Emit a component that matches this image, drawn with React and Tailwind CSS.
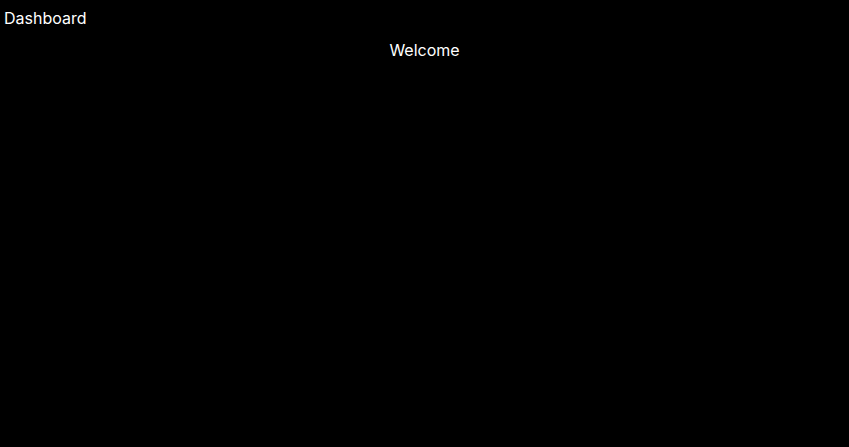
function App() {
  return (
    <div className="min-h-screen bg-black text-white font-['Inter',sans-serif]">
      <div className="px-1 pt-1.5 pb-1 text-base">Dashboard</div>
      <h1 className="text-center text-base mt-1">Welcome</h1>
    </div>
  )
}

export default App
